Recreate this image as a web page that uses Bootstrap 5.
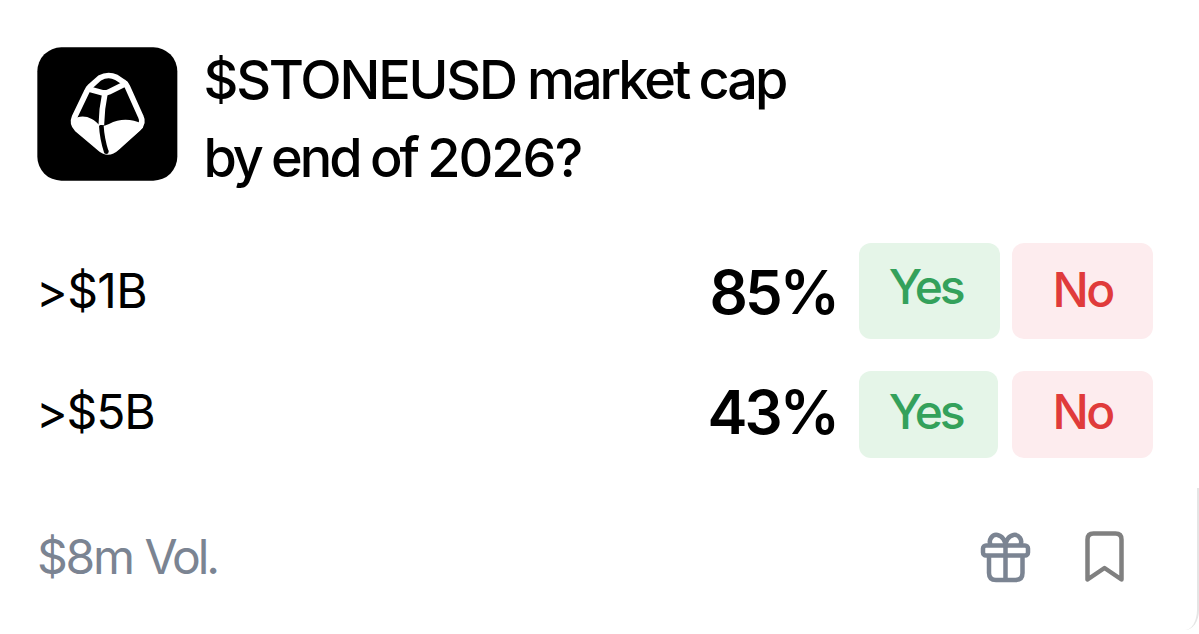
<!DOCTYPE html>
<html lang="en">
<head>
    <meta charset="UTF-8">
    <meta name="viewport" content="width=device-width, initial-scale=1.0">
    <title>$STONEUSD market cap by end of 2026?</title>
    <link href="https://cdn.jsdelivr.net/npm/bootstrap@5.3.0/dist/css/bootstrap.min.css" rel="stylesheet">
    <style>
        body {
            background: #fff;
            color: #000;
            font-family: Inter, "Liberation Sans", sans-serif;
            overflow: hidden;
        }
        .market {
            height: 634px;
            padding: 40px 46px 0 37px;
        }
        .market-logo {
            width: 141px;
            height: 134px;
            margin-top: 7px;
            margin-right: 26px;
        }
        .market-title {
            font-size: 54px;
            font-weight: 500;
            line-height: 78px;
            letter-spacing: -3px;
            word-spacing: -1.2px;
            padding-top: 1px;
            margin-left: -0.5px;
        }
        .ticker {
            letter-spacing: -2.2px;
            margin-right: 1px;
        }
        .year {
            letter-spacing: -2px;
        }
        .outcomes {
            margin-top: 46px;
            gap: 32px;
        }
        .outcome {
            height: 96px;
        }
        .outcome-short {
            height: 87px;
        }
        .outcome-label {
            font-size: 48px;
            line-height: 60px;
            letter-spacing: -0.6px;
            margin-left: -1px;
        }
        .outcome-chance {
            font-size: 60px;
            font-weight: 600;
            line-height: 60px;
            letter-spacing: -3px;
            margin-right: 22px;
            padding-top: 1px;
        }
        .outcome-short .outcome-label {
            letter-spacing: -1.2px;
        }
        .outcome-short .outcome-label,
        .outcome-short .outcome-chance {
            padding-bottom: 6px;
        }
        .btn-vote {
            width: 141px;
            border: 0;
            border-radius: 12px;
            font-size: 48px;
            font-weight: 500;
            line-height: 60px;
            letter-spacing: -2.7px;
            padding: 0 0 3px;
        }
        .btn-yes, .btn-yes:hover {
            background: #e5f5e8;
            color: #34a15b;
            letter-spacing: -3.3px;
            padding: 0 8px 8px 0;
        }
        .btn-no, .btn-no:hover {
            background: #fdecee;
            color: #e03b3b;
        }
        .outcome-short .btn-vote {
            padding-bottom: 5px;
        }
        .outcome-short .btn-yes {
            width: 139px;
            margin-right: 2px;
            padding-right: 6px;
        }
        .market-footer {
            margin-top: 69px;
            height: 60px;
            padding-right: 29px;
        }
        .volume {
            color: #7b8492;
            font-size: 48px;
            line-height: 60px;
            letter-spacing: -3.1px;
            word-spacing: 1.5px;
        }
        .amount {
            letter-spacing: -2.3px;
        }
        .card-edge {
            right: 0;
            top: 488px;
            width: 14px;
            height: 142px;
            border-right: 2px solid #e5e5e5;
            border-bottom-right-radius: 14px 20px;
        }
    </style>
</head>
<body>
    <div class="market position-relative">
        <!-- Header -->
        <div class="d-flex align-items-start">
            <svg class="market-logo flex-shrink-0" viewBox="0 0 423 402">
                <rect x="1" y="1" width="420" height="400" rx="72" fill="#000"/>
                <path d="M107 217 C135 200 165 208 190 237 Q202 238 216 231 C250 213 285 216 315 230 L318 242 L240 309 Q213 325 186 309 L107 236Z" fill="#fff"/>
                <g fill="none" stroke="#fff" stroke-width="17" stroke-linejoin="round" stroke-linecap="round">
                    <path d="M188 93 Q213 79 238 91 L259 105 Q267 110 271 119 L311 208 Q321 228 304 244 L240 302 Q213 327 186 302 L120 246 Q104 230 113 209 L149 134 Q152 126 160 118Z"/>
                    <path d="M155 126 L196 137 Q207 139 217 134 L265 110"/>
                    <path d="M204 138 Q194 185 193 234" stroke-linecap="butt"/>
                </g>
                <path d="M193 236 Q195 275 208 315" fill="none" stroke="#000" stroke-width="14"/>
                <circle cx="208" cy="314" r="7" fill="#000"/>
            </svg>
            <h1 class="market-title mb-0"><span class="ticker">$STONEUSD</span> market cap<br>by end of <span class="year">2026?</span></h1>
        </div>

        <!-- Outcomes -->
        <div class="outcomes d-flex flex-column">
            <div class="outcome d-flex align-items-center">
                <div class="outcome-label me-auto">&gt;$1B</div>
                <div class="outcome-chance">85%</div>
                <div class="d-flex align-self-stretch" style="gap: 12px">
                    <button type="button" class="btn btn-vote btn-yes">Yes</button>
                    <button type="button" class="btn btn-vote btn-no">No</button>
                </div>
            </div>
            <div class="outcome outcome-short d-flex align-items-center">
                <div class="outcome-label me-auto">&gt;$5B</div>
                <div class="outcome-chance">43%</div>
                <div class="d-flex align-self-stretch" style="gap: 12px">
                    <button type="button" class="btn btn-vote btn-yes">Yes</button>
                    <button type="button" class="btn btn-vote btn-no">No</button>
                </div>
            </div>
        </div>

        <!-- Footer -->
        <div class="market-footer d-flex align-items-center justify-content-between">
            <div class="volume"><span class="amount">$8m</span> Vol.</div>
            <div class="d-flex align-items-center" style="gap: 53px">
                <svg width="52" height="54" viewBox="0 0 52 54" fill="none" stroke="#7b8492" stroke-width="4.5" stroke-linejoin="round">
                    <rect x="3" y="15.500" width="45" height="10" rx="3"/>
                    <path d="M9 26 V43 Q9 50 16 50 H35.500 Q42.500 50 42.500 43 V26 M25.500 15 V50"/>
                    <path d="M11 16 C7.500 10 12.500 4 17.500 5 C22.500 6 25.500 11 25.500 16 C25.500 11 28.500 6 33.500 5 C38.500 4 43.500 10 40 16"/>
                </svg>
                <svg width="39" height="54" viewBox="0 0 39 54" fill="none" stroke="#808080" stroke-width="4.500" stroke-linejoin="round">
                    <path d="M2.500 49.500 V9.500 Q2.500 3.500 8.500 3.500 H30.500 Q36.500 3.500 36.500 9.500 V49.500 L19.500 38Z"/>
                </svg>
            </div>
        </div>

        <div class="card-edge position-absolute"></div>
    </div>

    <script src="https://cdn.jsdelivr.net/npm/bootstrap@5.3.0/dist/js/bootstrap.bundle.min.js"></script>
</body>
</html>
